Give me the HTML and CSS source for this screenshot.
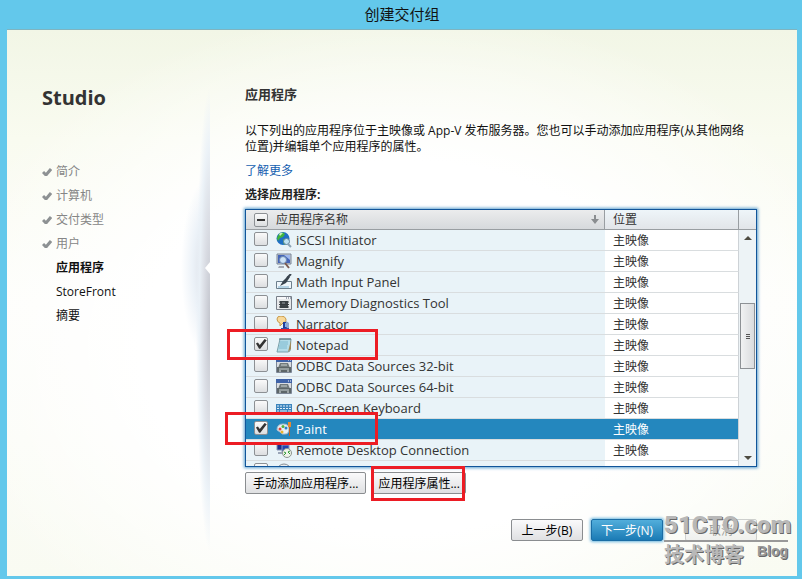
FILE: index.html
```
<!DOCTYPE html>
<html lang="zh-CN">
<head>
    <meta charset="UTF-8">
    <meta name="viewport" content="width=device-width, initial-scale=1.0">
    <title>创建交付组</title>
    <link rel="stylesheet" href="styles.css">
</head>
<body>
    <header class="titlebar">创建交付组</header>
    <div class="dialog">
        <nav class="sidebar">
            <h1>Studio</h1>
            <ul class="steps">
                <li class="done"><svg class="tick" viewBox="0 0 10 9"><path d="M1 5l3 3 5-6" /></svg>简介</li>
                <li class="done"><svg class="tick" viewBox="0 0 10 9"><path d="M1 5l3 3 5-6" /></svg>计算机</li>
                <li class="done"><svg class="tick" viewBox="0 0 10 9"><path d="M1 5l3 3 5-6" /></svg>交付类型</li>
                <li class="done"><svg class="tick" viewBox="0 0 10 9"><path d="M1 5l3 3 5-6" /></svg>用户</li>
                <li class="current">应用程序</li>
                <li>StoreFront</li>
                <li>摘要</li>
            </ul>
        </nav>
        <main class="content">
            <h2>应用程序</h2>
            <p class="intro">以下列出的应用程序位于主映像或 App-V 发布服务器。您也可以手动添加应用程序(从其他网络位置)并编辑单个应用程序的属性。</p>
            <a class="more" href="#">了解更多</a>
            <h3>选择应用程序:</h3>
            <div class="list-wrap">
                <div class="list">
                    <table class="apps">
                        <thead>
                            <tr>
                                <th class="name">
                                    <div class="cell">
                                        <input type="checkbox" class="some" id="all">
                                        <label class="label" for="all">应用程序名称</label>
                                        <svg class="sort" viewBox="0 0 8 9"><path d="M3 0h2v4h3L4 9 0 4h3z" fill="#8a8d90" /></svg>
                                    </div>
                                </th>
                                <th class="place">位置</th>
                            </tr>
                        </thead>
                        <tbody>
                            <tr>
                                <td><div class="cell"><input type="checkbox" id="app1">
                                    <svg class="icon" viewBox="0 0 16 16"><circle cx="7" cy="6.500" r="6.500" fill="#1f6fc4" /><path d="M3 2q4-3 6 0l-2 3-3 1-2 3-1-3zM7 7l4 1-2 5-2-2z" fill="#41b53c" /><path d="M3 2q2-2 4-1L4 4z" fill="#c9f0b8" /><circle cx="10.500" cy="9.500" r="3" fill="#bfe3f2" stroke="#5d7f99" /><path d="M12 12l3 3" stroke="#8ba3b5" stroke-width="2" /></svg>
                                    <label for="app1">iSCSI Initiator</label></div></td>
                                <td class="place">主映像</td>
                            </tr>
                            <tr>
                                <td><div class="cell"><input type="checkbox" id="app2">
                                    <svg class="icon" viewBox="0 0 16 16"><path d="M1 1h14v10H1z" fill="#c9ced6" stroke="#7b8596" /><path d="M2 2h12v8H2z" fill="#4565b8" /><path d="M8 2h6v5z" fill="#9fb9ee" /><circle cx="7" cy="7" r="3.500" fill="#cce2f7" stroke="#6b87ae" /><path d="M9 10l4 5" stroke="#7b5b50" stroke-width="2" /><path d="M3 13h5v2H2z" fill="#a3a8b2" /></svg>
                                    <label for="app2">Magnify</label></div></td>
                                <td class="place">主映像</td>
                            </tr>
                            <tr>
                                <td><div class="cell"><input type="checkbox" id="app3">
                                    <svg class="icon" viewBox="0 0 16 16"><path d="M.5 7.500h15v7H.5z" fill="#eef6fb" stroke="#6c7f8d" /><path d="M2 13h11" stroke="#7db1d2" /><path d="M4 12l3-5 5-5 2 1-4 6z" fill="#39444f" /><path d="M11 4l4-4" stroke="#39444f" stroke-width="2" /></svg>
                                    <label for="app3">Math Input Panel</label></div></td>
                                <td class="place">主映像</td>
                            </tr>
                            <tr>
                                <td><div class="cell"><input type="checkbox" id="app4">
                                    <svg class="icon" viewBox="0 0 16 16"><path d="M.5 1.500h15v13H.5z" fill="#e6e8ea" stroke="#777e88" /><path d="M1 2h14v2H1z" fill="#f7f8fa" /><path d="M10 3h1m1 0h1m1 0h1" stroke="#4b5970" /><path d="M4 6h8v7H4z" fill="#41464a" /><path d="M3 7h10M3 9.500h10M3 12h10" stroke="#353a3e" /><path d="M6 8h3" stroke="#9a9fa3" /></svg>
                                    <label for="app4">Memory Diagnostics Tool</label></div></td>
                                <td class="place">主映像</td>
                            </tr>
                            <tr>
                                <td><div class="cell"><input type="checkbox" id="app5">
                                    <svg class="icon" viewBox="0 0 16 16"><path d="M1 3q0-3 4-3t5 3-3 4l-3 3V7Q1 6 1 3z" fill="#f8d99a" stroke="#c99b4d" /><path d="M7 6h4v7H7z" fill="#243f9b" /><path d="M10 5l3 2v6l-3-2z" fill="#8fa6cf" /><path d="M5 12h8v3H5z" fill="#3651a8" /><path d="M9 7h1v4H9z" fill="#7fb6f5" /></svg>
                                    <label for="app5">Narrator</label></div></td>
                                <td class="place">主映像</td>
                            </tr>
                            <tr>
                                <td><div class="cell"><input type="checkbox" id="app6" checked>
                                    <svg class="icon" viewBox="0 0 16 16"><path d="M4 2h11l-1 12-2 1H1z" fill="#b3dce8" stroke="#7ba1ab" /><path d="M12 15l3-3V3z" fill="#a08a59" /><path d="M4 1v2M6 1v2M8 1v2M10 1v2M12 1v2M14 1v2" stroke="#596e75" /><path d="M4 5h8M4 7h8M3 9h8M3 11h8" stroke="#7fbad0" /></svg>
                                    <label for="app6">Notepad</label></div></td>
                                <td class="place">主映像</td>
                            </tr>
                            <tr>
                                <td><div class="cell"><input type="checkbox" id="app7">
                                    <svg class="icon" viewBox="0 0 16 16"><path d="M.5.5h15v14H.5z" fill="#d9dde2" stroke="#7d8796" /><path d="M0 0h16v4H0z" fill="#3f63a8" /><path d="M12 2h1m1 0h1" stroke="#fff" /><path d="M4 5h8l2 5H2z" fill="#717a7c" /><path d="M1 9h14v5H1z" fill="#5d6668" /><path d="M5 7h6M3 11h10" stroke="#cbd3d3" /><path d="M3 13h2m6 0h2" stroke="#dfe4e4" /></svg>
                                    <label for="app7">ODBC Data Sources 32-bit</label></div></td>
                                <td class="place">主映像</td>
                            </tr>
                            <tr>
                                <td><div class="cell"><input type="checkbox" id="app8">
                                    <svg class="icon" viewBox="0 0 16 16"><path d="M.5.5h15v14H.5z" fill="#d9dde2" stroke="#7d8796" /><path d="M0 0h16v4H0z" fill="#3f63a8" /><path d="M12 2h1m1 0h1" stroke="#fff" /><path d="M4 5h8l2 5H2z" fill="#717a7c" /><path d="M1 9h14v5H1z" fill="#5d6668" /><path d="M5 7h6M3 11h10" stroke="#cbd3d3" /><path d="M3 13h2m6 0h2" stroke="#dfe4e4" /></svg>
                                    <label for="app8">ODBC Data Sources 64-bit</label></div></td>
                                <td class="place">主映像</td>
                            </tr>
                            <tr>
                                <td><div class="cell"><input type="checkbox" id="app9">
                                    <svg class="icon" viewBox="0 0 16 16"><path d="M0 4h16v9H0z" fill="#3c85bd" /><path d="M1 6h14M1 8.500h14" stroke="#e4f0f8" stroke-dasharray="2 1" /><path d="M1 11h2m1 0h7m1 0h3" stroke="#e4f0f8" /></svg>
                                    <label for="app9">On-Screen Keyboard</label></div></td>
                                <td class="place">主映像</td>
                            </tr>
                            <tr class="selected">
                                <td><div class="cell"><input type="checkbox" id="app10" checked>
                                    <svg class="icon" viewBox="0 0 16 16"><path d="M1 9q0-6 6-6t6 5-4 5-3 0-5-4z" fill="#e9f0f4" stroke="#a8bccb" /><circle cx="4" cy="8" r="1.500" fill="#e0453a" /><circle cx="7" cy="5.500" r="1.500" fill="#55b33b" /><circle cx="10" cy="7" r="1.500" fill="#2c82c9" /><circle cx="6" cy="11" r="1.500" fill="#eab32e" /><path d="M12 1h3v5h-3z" fill="#e68a32" /><path d="M13 6h1v9h-1z" fill="#b4642b" /></svg>
                                    <label for="app10">Paint</label></div></td>
                                <td class="place">主映像</td>
                            </tr>
                            <tr>
                                <td><div class="cell"><input type="checkbox" id="app11">
                                    <svg class="icon" viewBox="0 0 16 16"><path d="M1 1h7v7H1z" fill="#1d2d8c" stroke="#8793b5" /><path d="M6 3h7v7H6z" fill="#2544b0" stroke="#8e9bbb" /><path d="M2 10h5v2H2z" fill="#9aa5b7" /><circle cx="11" cy="11" r="4.500" fill="#eef3e9" stroke="#8c9490" /><path d="M8 10l2 1-2 2M14 9l-2 1 2 2" fill="none" stroke="#2f9a34" /></svg>
                                    <label for="app11">Remote Desktop Connection</label></div></td>
                                <td class="place">主映像</td>
                            </tr>
                            <tr>
                                <td><div class="cell"><input type="checkbox" aria-label="应用程序">
                                    <svg class="icon" viewBox="0 0 16 16"><circle cx="8" cy="8" r="7" fill="#e9ecef" stroke="#858c93" /></svg>
                                </div></td>
                                <td class="place"></td>
                            </tr>
                        </tbody>
                    </table>
                    <div class="scrollbar">
                        <div class="corner"></div>
                        <div class="track">
                            <svg class="arrow" viewBox="0 0 8 4"><path d="M0 4l4-4 4 4z" fill="#4e4c42" /></svg>
                            <div class="thumb"><i></i><i></i><i></i></div>
                            <svg class="arrow" viewBox="0 0 8 4"><path d="M0 0l4 4 4-4z" fill="#4e4c42" /></svg>
                        </div>
                    </div>
                </div>
                <div class="mark mark-notepad"></div>
                <div class="mark mark-paint"></div>
            </div>
            <div class="actions">
                <button type="button">手动添加应用程序...</button>
                <div class="marked">
                    <button type="button">应用程序属性...</button>
                    <div class="mark mark-props"></div>
                </div>
            </div>
            <div class="footer">
                <button type="button">上一步(B)</button>
                <button type="button" class="primary">下一步(N)</button>
                <button type="button" class="cancel">取消</button>
            </div>
        </main>
        <div class="watermark">
            <div class="site">51CTO.com</div>
            <div class="sub"><span>技术博客</span><b>Blog</b></div>
        </div>
    </div>
</body>
</html>
```
FILE: styles.css
```
* {
    box-sizing: border-box;
}
body {
    margin: 0;
    min-height: 100vh;
    padding: 0 5px 3px 7px;
    display: flex;
    flex-direction: column;
    background-color: #63c8eb;
    font-family: "Open Sans", "Noto Sans CJK SC", sans-serif;
    font-size: 12px;
    line-height: 16px;
    color: #111;
}
h1, h2, h3, p, ul {
    margin: 0;
    padding: 0;
}
.titlebar {
    height: 29px;
    line-height: 29px;
    font-size: 15px;
    text-align: center;
}
.dialog {
    position: relative;
    flex: 1;
    display: flex;
    border-top: 1px solid #7fb4c0;
    background:
        radial-gradient(ellipse 60% 62% at 50% 58%, #fff 55%, rgba(255, 255, 255, 0) 100%),
        linear-gradient(#f2f6e6, #f9fbf0 20%, #fdfdfa 50%, #f9fbf2);
}

/* steps */
.sidebar {
    position: relative;
    width: 203px;
    flex: none;
    padding: 54px 0 0 35px;
    background:
        radial-gradient(ellipse 14px 232px at 203px 290px, #c3c5cd, #dcdfe6 45%, rgba(234, 241, 247, 0.9) 75%, rgba(240, 247, 251, 0)),
        radial-gradient(ellipse 29px 92px at 203px 238px, #d4d7df, #ecf2f8 60%, rgba(244, 248, 250, 0));
}
.sidebar::after {
    content: "";
    position: absolute;
    right: 0;
    top: 232px;
    border: 6px solid transparent;
    border-left: 0;
    border-right: 5px solid #fff;
}
.sidebar h1 {
    font-size: 20px;
    line-height: 28px;
    color: #333;
}
.steps {
    margin-top: 48px;
    list-style: none;
}
.steps li {
    padding-left: 14px;
    line-height: 24px;
    color: #111;
}
.steps .done {
    display: flex;
    align-items: center;
    gap: 4px;
    padding-left: 0;
    color: #868686;
}
.steps .current {
    font-weight: bold;
}
.tick {
    width: 10px;
    height: 9px;
    margin-bottom: 2px;
    fill: none;
    stroke: #8d9193;
    stroke-width: 3;
}

.content {
    flex: 1;
    min-width: 0;
    padding: 54px 40px 32px 35px;
}
h2 {
    font-size: 13px;
    line-height: 20px;
    color: #333;
}
.intro {
    margin: 19px 0 8px;
    padding-right: 6px;
}
.more {
    display: block;
    color: #1560b0;
    text-decoration: none;
}
h3 {
    margin: 8px 0 6px;
    font-size: 12px;
    color: #222;
}

/* application list */
.list-wrap {
    position: relative;
}
.list {
    display: flex;
    height: 258px;
    overflow: hidden;
    border: 1px solid #11559a;
    box-shadow: 0 0 3px 1px #5c9fce;
    background-color: #fff;
}
.apps {
    flex: 1;
    table-layout: fixed;
    border-spacing: 0;
    color: #333;
}
.apps th, .apps td {
    padding: 0;
    text-align: left;
    font-weight: normal;
}
.apps th {
    height: 20px;
    border-bottom: 1px solid #999ea2;
    border-right: 1px solid #999ea2;
    background: linear-gradient(#eef5f9, #e2e5e9);
}
.apps th.name {
    background: linear-gradient(#ebeced, #d6d9dc);
}
.apps td {
    height: 21px;
    border-bottom: 1px solid #d9dddf;
    background-color: #e9f3f8;
    font-size: 13px;
}
.apps .place {
    width: 134px;
    padding-left: 8px;
    font-size: 12px;
}
.apps td.place {
    padding-top: 2px;
    border-right: 1px solid #cdd2d6;
    background-color: #fff;
}
.apps .selected td, .apps .selected td.place {
    background-color: #2487be;
    color: #fff;
}
.cell {
    display: flex;
    align-items: center;
    height: 19px;
    padding: 0 5px 0 8px;
}
.cell .label {
    flex: 1;
    margin-left: 8px;
}
.apps input {
    appearance: none;
    width: 14px;
    height: 14px;
    margin: 0;
    border: 1px solid #8c9094;
    border-radius: 2px;
    background: linear-gradient(#fafafa, #dcdee0);
}
.apps td input {
    margin-bottom: 2px;
}
.apps input.some {
    padding: 5px 2px;
}
.apps input.some::before {
    content: "";
    display: block;
    width: 8px;
    height: 2px;
    background-color: #333;
}
.apps input:checked::before {
    content: "";
    display: block;
    width: 12px;
    height: 12px;
    background-color: #333;
    clip-path: polygon(8% 46%, 24% 38%, 40% 58%, 80% 8%, 98% 18%, 44% 90%, 34% 90%);
}
.icon {
    width: 16px;
    height: 16px;
    margin: 0 4px 0 8px;
}
.sort {
    width: 8px;
    height: 9px;
}

.scrollbar {
    width: 17px;
    display: flex;
    flex-direction: column;
    background-color: #edf3f6;
}
.corner {
    height: 20px;
    border-bottom: 1px solid #999ea2;
    background: linear-gradient(#eef5f9, #e2e5e9);
}
.track {
    flex: 1;
    display: flex;
    flex-direction: column;
    justify-content: space-between;
    align-items: center;
    padding: 6px 0;
}
.arrow {
    width: 8px;
    height: 4px;
}
.thumb {
    width: 15px;
    height: 66px;
    margin-top: -24px;
    display: flex;
    flex-direction: column;
    align-items: center;
    justify-content: center;
    gap: 1px;
    border: 1px solid #8e9296;
    background: linear-gradient(90deg, #f1f2f3, #dadcde);
}
.thumb i {
    width: 4px;
    height: 1px;
    background-color: #555;
}

/* red boxes over the parts to click */
.mark {
    position: absolute;
    border: 3px solid #ec1c24;
    pointer-events: none;
}
.mark-notepad {
    left: -18px;
    top: 120px;
    width: 151px;
    height: 31px;
}
.mark-paint {
    left: -20px;
    top: 203px;
    width: 153px;
    height: 33px;
}
.mark-props {
    left: -1px;
    top: -6px;
    width: 94px;
    height: 35px;
}
.marked {
    position: relative;
}

button {
    height: 22px;
    padding: 2px 7px 0;
    border: 1px solid #8a8d90;
    border-radius: 2px;
    background: linear-gradient(#fafafb, #dfe0e2);
    font-family: inherit;
    font-size: 12px;
    line-height: 16px;
    color: #000;
}
.marked button {
    padding: 2px 5px 0;
}
.actions {
    display: flex;
    gap: 6px;
    margin-top: 5px;
}
.footer {
    display: flex;
    justify-content: flex-end;
    gap: 8px;
    margin-top: 25px;
}
.footer button {
    width: 72px;
}
.footer .primary {
    border-color: #1a6da5;
    background: linear-gradient(#52aedb, #1b7bb5);
    box-shadow: 0 0 3px 1px #6cb6de;
    color: #fff;
}
.footer .cancel {
    margin-left: 14px;
    opacity: 0.4;
}

.watermark {
    position: absolute;
    right: 9px;
    bottom: 8px;
    width: 124px;
    color: #b8b8b8;
    text-shadow: 1px 1px 0 #686868;
    pointer-events: none;
}
.site {
    border-bottom: 2px solid #999;
    font-family: Roboto, "Liberation Sans", sans-serif;
    font-size: 24px;
    font-weight: 900;
    line-height: 30px;
    white-space: nowrap;
}
.sub {
    display: flex;
    justify-content: space-between;
    font-size: 20px;
    font-weight: bold;
    line-height: 26px;
}
.sub b {
    font-family: "Liberation Sans", sans-serif;
    font-size: 14px;
    line-height: 18px;
    color: #999;
}
```
